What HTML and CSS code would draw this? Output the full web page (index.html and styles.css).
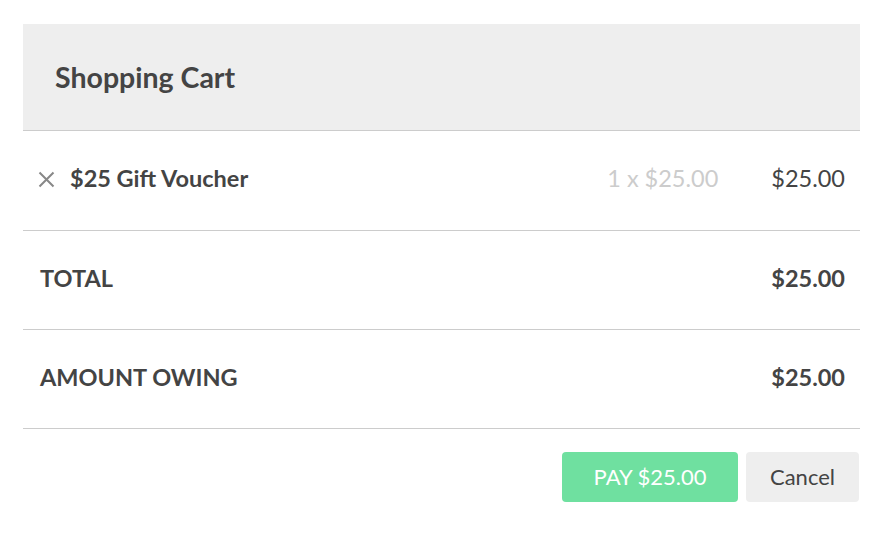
FILE: index.html
```html
<!DOCTYPE html>
<html lang="en">
<head>
  <meta charset="UTF-8">
  <meta name="viewport" content="width=device-width, initial-scale=1.0">
  <title>Shopping Cart</title>
  <link rel="stylesheet" href="styles.css">
</head>
<body>
  <div class="cart">
    <div class="cart-header">
      <h2>Shopping Cart</h2>
    </div>
    <div class="cart-row item-row">
      <div class="item">
        <span class="remove">
          <svg width="17" height="17" viewBox="0 0 17 17"><path d="M1.5 1.5 L15.5 15.5 M15.5 1.5 L1.5 15.5" stroke="#888" stroke-width="2" fill="none"/></svg>
        </span>
        <span class="item-name">$25 Gift Voucher</span>
      </div>
      <span class="qty">1 x $25.00</span>
      <span class="amount">$25.00</span>
    </div>
    <div class="cart-row">
      <span class="label">TOTAL</span>
      <span class="amount strong">$25.00</span>
    </div>
    <div class="cart-row">
      <span class="label">AMOUNT OWING</span>
      <span class="amount strong">$25.00</span>
    </div>
    <div class="actions">
      <button class="btn btn-pay">PAY $25.00</button>
      <button class="btn btn-cancel">Cancel</button>
    </div>
  </div>
</body>
</html>
```

FILE: styles.css
```css
body { margin: 0; background: #fff; font-family: Lato, "Open Sans", sans-serif; color: #444; }
.cart { margin: 24px 28px 0 23px; }
.cart-header { background: #eee; height: 106px; display: flex; align-items: center; padding: 0 32px; border-bottom: 1px solid #ccc; }
.cart-header h2 { margin: 0; font-size: 28.5px; font-weight: 700; }
.cart-row { display: flex; align-items: center; box-sizing: border-box; height: 99px; padding: 0 15px 5px 17px; border-bottom: 1px solid #ccc; font-size: 23.5px; }
.item-row { height: 100px; }
.item { display: flex; align-items: center; flex: 1; }
.remove { display: flex; margin-right: 15px; margin-left: -2px; padding-top: 2px; }
.item-name { font-weight: 700; }
.qty { color: #ccc; text-align: right; margin-right: 53px; }
.label { flex: 1; font-weight: 700; }
.amount { text-align: right; }
.strong { font-weight: 700; }
.actions { display: flex; justify-content: flex-end; gap: 8px; padding-top: 23px; margin-right: 1px; }
.btn { height: 50px; border: none; border-radius: 4px; padding-bottom: 2px; font-family: Lato, sans-serif; font-size: 22px; cursor: pointer; }
.btn-pay { width: 176px; background: #6fe0a0; color: #fff; }
.btn-cancel { width: 113px; background: #eee; color: #444; }
```
